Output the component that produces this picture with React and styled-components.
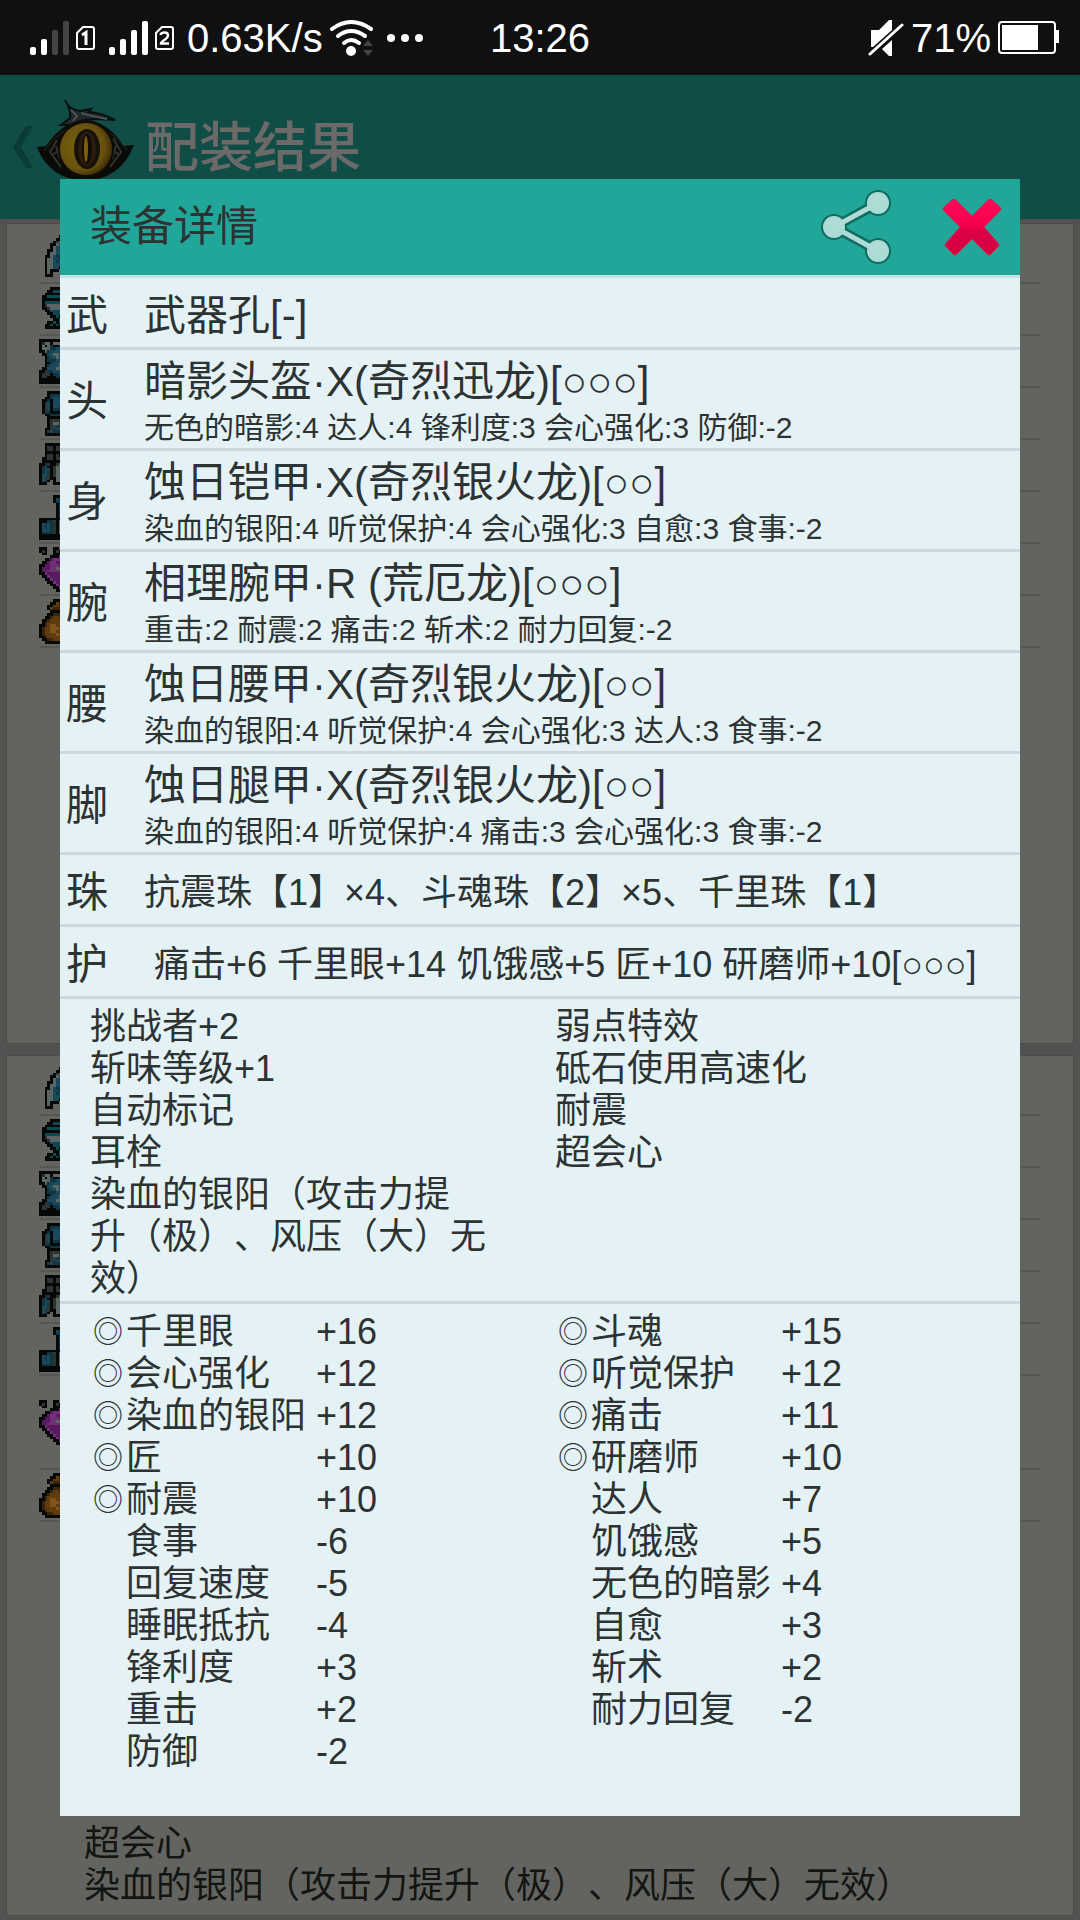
import React, { useState } from 'react';
import styled, { createGlobalStyle } from 'styled-components';

const GEAR = [
    { slot: '武', name: '武器孔[-]' },
    { slot: '头', name: '暗影头盔·X(奇烈迅龙)[○○○]', points: '无色的暗影:4 达人:4 锋利度:3 会心强化:3 防御:-2' },
    { slot: '身', name: '蚀日铠甲·X(奇烈银火龙)[○○]', points: '染血的银阳:4 听觉保护:4 会心强化:3 自愈:3 食事:-2' },
    { slot: '腕', name: '相理腕甲·R (荒厄龙)[○○○]', points: '重击:2 耐震:2 痛击:2 斩术:2 耐力回复:-2' },
    { slot: '腰', name: '蚀日腰甲·X(奇烈银火龙)[○○]', points: '染血的银阳:4 听觉保护:4 会心强化:3 达人:3 食事:-2' },
    { slot: '脚', name: '蚀日腿甲·X(奇烈银火龙)[○○]', points: '染血的银阳:4 听觉保护:4 痛击:3 会心强化:3 食事:-2' },
    { slot: '珠', name: '抗震珠【1】×4、斗魂珠【2】×5、千里珠【1】', small: true },
    { slot: '护', name: ' 痛击+6 千里眼+14 饥饿感+5 匠+10 研磨师+10[○○○]', small: true },
];

const SKILLS = [
    ['挑战者+2', '斩味等级+1', '自动标记', '耳栓', '染血的银阳（攻击力提\n升（极）、风压（大）无\n效）'],
    ['弱点特效', '砥石使用高速化', '耐震', '超会心'],
];

const TOTALS = [
    [
        ['千里眼', '+16', true],
        ['会心强化', '+12', true],
        ['染血的银阳', '+12', true],
        ['匠', '+10', true],
        ['耐震', '+10', true],
        ['食事', '-6'],
        ['回复速度', '-5'],
        ['睡眠抵抗', '-4'],
        ['锋利度', '+3'],
        ['重击', '+2'],
        ['防御', '-2'],
    ],
    [
        ['斗魂', '+15', true],
        ['听觉保护', '+12', true],
        ['痛击', '+11', true],
        ['研磨师', '+10', true],
        ['达人', '+7'],
        ['饥饿感', '+5'],
        ['无色的暗影', '+4'],
        ['自愈', '+3'],
        ['斩术', '+2'],
        ['耐力回复', '-2'],
    ],
];

const RESULT_SKILLS = ['超会心', '染血的银阳（攻击力提升（极）、风压（大）无效）'];

const PIXELS = {
    '#': '#050807',
    w: '#5a6564',
    g: '#2c3436',
    b: '#1b495c',
    c: '#0c4a4f',
    d: '#113643',
    p: '#571a5c',
    m: '#702f76',
    o: '#5f3b0e',
    y: '#80531a',
    n: '#38250b',
};

// left half of each 16x16 sprite, the right half is its mirror
const SPRITES = {
    weapon: [
        '.......#', '......##', '.....#gw', '....##wb', '....#wbb', '...##wbb', '...#wwbb', '..##wbdd',
        '..#wwbbd', '..#wwbdb', '..#wwbbb', '..#wwbb#', '..#w###.', '..#w#...', '..###...', '........',
    ],
    head: [
        '....####', '...##ccc', '..######', '.##ccccc', '.#######', '.#cccccc', '.#gwwwww', '.##gwwww',
        '..##cccc', '...##ccc', '....##c#', '.....##c', '...##c#c', '..##c#c#', '..######', '........',
    ],
    body: [
        '########', '#gww#...', '#w#wd##d', '#wwwddbb', '##wdbbbb', '.##bbwwb', '..#dbbwb', '..#dddbb',
        '..##dbbw', '..#dbbbw', '.##bbbww', '##gddbbb', '#ggg#ddb', '#gg###dd', '########', '########',
    ],
    arm: [
        '...#####', '...#dddd', '..##dbbb', '.##d#bbb', '.#gb#bbb', '.#gb#bbd', '.#gb#ddd', '.#dd####',
        '..##dddd', '...#####', '...#gggg', '...#gwwg', '...#gbgg', '..##ggbb', '..#gbddd', '..######',
    ],
    waist: [
        '..######', '..#gg#gg', '..#gg#gg', '..######', '..#gg#g#', '.##gg#gg', '.#######', '##dg##gw',
        '#db##gww', '#dbb#gww', '#dbg#gww', '#bbg#gww', '#bgg##ww', '#bg#.#ww', '###..###', '........',
    ],
    leg: [
        '.....###', '.....#cd', '.....#dd', '......#d', '......#c', '......#d', '......#d', '......#d',
        '########', '###ddg#w', '#bdbdg#w', '#bdbdg#w', '#bbbdg#w', '#ddddg#w', '########', '########',
    ],
    gem: [
        '###..##.', '#g#..#g#', '.##..###', '....###m', '..##pmmm', '.##pmmpp', '##ppmmmp', '#pppmmww',
        '#ppmmmmm', '##mppppp', '.##mpppp', '..##mppp', '...##mpp', '....##mp', '.....##m', '......##',
    ],
    bag: [
        '.....###', '....##on', '...##oon', '...#onnn', '....####', '...##nnn', '..##noon', '.##noooo',
        '.#nooooo', '##noyyoo', '#nooyyyo', '#nooyyoo', '#nooooyo', '##nooooo', '.##nnooo', '..######',
    ],
};

const SPRITE_ORDER = ['weapon', 'head', 'body', 'arm', 'waist', 'leg', 'gem', 'bag'];

function Sprite({ name }) {
    const rects = [];
    SPRITES[name].forEach((line, y) => {
        (line + line.split('').reverse().join('')).split('').forEach((key, x) => {
            if (PIXELS[key]) {
                rects.push(<rect key={`${x}-${y}`} x={x} y={y} width="1" height="1" fill={PIXELS[key]} />);
            }
        });
    });
    return (
        <svg width="45" height="45" viewBox="0 0 16 16" shapeRendering="crispEdges" aria-hidden="true">
            {rects}
        </svg>
    );
}

function Signal({ level }) {
    return (
        <svg width="39" height="35" viewBox="0 0 39 35" aria-hidden="true">
            {[8, 16, 25, 34].map((h, i) => (
                <rect key={h} x={i * 11} y={35 - h} width="6" height={h} rx="2" fill={i < level ? '#fff' : '#444'} />
            ))}
        </svg>
    );
}

function Sim({ number }) {
    return (
        <svg width="19" height="24" viewBox="0 0 19 24" fill="none" stroke="#fff" strokeWidth="2" aria-hidden="true">
            <path d="M7 1H16Q18 1 18 3V21Q18 23 16 23H3Q1 23 1 21V7Z" />
            {number === 1
                ? <path d="M6 9L10 6.500V19" strokeWidth="3" />
                : <path d="M5.500 9Q6 6.500 9.500 6.500Q13 6.500 13 9.500Q13 11.500 10 13.500Q6 16 6 17.500H14" strokeWidth="2.500" />}
        </svg>
    );
}

function Wifi() {
    return (
        <svg width="44" height="36" viewBox="0 0 44 36" fill="none" stroke="#fff" strokeWidth="4" strokeLinecap="round" aria-hidden="true">
            <path d="M2 9Q21 -5 41 9" />
            <path d="M8 16Q21 6 35 16" />
            <path d="M14 23Q21 17 29 23" />
            <circle cx="21" cy="31" r="5" fill="#fff" stroke="none" />
            <path d="M33 26L38 20L43 26ZM33 30L38 36L43 30Z" fill="#444" stroke="none" />
        </svg>
    );
}

function Muted() {
    return (
        <svg width="36" height="36" viewBox="0 0 36 36" aria-hidden="true">
            <path d="M3 10H11L21 0H24V10L5 27H3Z" fill="#fff" />
            <path d="M24 20V36H21L14 29Z" fill="#fff" />
            <path d="M2 34L34 5" stroke="#fff" strokeWidth="3" strokeLinecap="round" />
        </svg>
    );
}

function Battery() {
    return (
        <svg width="61" height="33" viewBox="0 0 61 33" aria-hidden="true">
            <rect x="1" y="1" width="56" height="31" rx="3" fill="none" stroke="#fff" strokeWidth="2" />
            <rect x="4" y="4" width="36" height="25" fill="#fff" />
            <path d="M58 9H61V22H58Z" fill="#fff" />
        </svg>
    );
}

function EyeLogo() {
    return (
        <svg width="97" height="94" viewBox="0 0 97 94" aria-hidden="true">
            <defs>
                <radialGradient id="iris" cx="0.4" cy="0.45" r="0.65">
                    <stop offset="0" stopColor="#7a640d" />
                    <stop offset="0.7" stopColor="#66500e" />
                    <stop offset="1" stopColor="#352507" />
                </radialGradient>
            </defs>
            <g transform="translate(0 -5)">
                <path d="M0 52L9 51Q26 26 48 25Q70 26 87 51L97 50Q84 84 48 86Q12 84 0 52Z" fill="#090b09" />
                <path d="M7 56Q26 30 48 28Q70 30 90 55" fill="none" stroke="#33281a" strokeWidth="1" />
                <path d="M20 45L13 57L24 72M76 43L84 57L73 72M15 60L24 54M82 60L74 53M19 51L23 64M79 51L75 64" fill="none" stroke="#33312a" strokeWidth="2" />
            </g>
            <path d="M28 0Q31 9 43 11L54 9L52 12Q65 13 78 20L58 19Q44 19 34 25L24 25L33 18Q34 10 28 0Z" fill="#20282b" stroke="#07100f" strokeWidth="2" />
            <path d="M34 10L40 16L36 21M44 13L55 16L70 19" fill="none" stroke="#4b5254" strokeWidth="2" />
            <ellipse cx="49" cy="49" rx="28" ry="29" fill="#100c05" />
            <ellipse cx="49" cy="49" rx="26" ry="26" fill="url(#iris)" />
            <ellipse cx="50" cy="49" rx="13" ry="20" fill="#15120a" />
            <ellipse cx="50" cy="49" rx="9" ry="17" fill="#2c1c0d" />
            <ellipse cx="50" cy="49" rx="5" ry="15" fill="#110b06" />
            <ellipse cx="49" cy="49" rx="2" ry="13" fill="#80600f" />
        </svg>
    );
}

function ShareIcon() {
    return (
        <svg width="70" height="76" viewBox="0 0 70 76" aria-hidden="true">
            <g stroke="#106b60" fill="#106b60">
                <path d="M57 14L13 38L57 62" fill="none" strokeWidth="10" />
                <circle cx="57" cy="14" r="13" stroke="none" />
                <circle cx="13" cy="38" r="13" stroke="none" />
                <circle cx="57" cy="62" r="13" stroke="none" />
            </g>
            <g stroke="#addcd6" fill="#addcd6">
                <path d="M57 14L13 38L57 62" fill="none" strokeWidth="5" />
                <circle cx="57" cy="14" r="11" stroke="none" />
                <circle cx="13" cy="38" r="11" stroke="none" />
                <circle cx="57" cy="62" r="11" stroke="none" />
            </g>
        </svg>
    );
}

function CrossIcon() {
    return (
        <svg width="60" height="60" viewBox="0 0 60 60" aria-hidden="true">
            <defs>
                <linearGradient id="cross" x1="0" y1="0" x2="0" y2="1">
                    <stop offset="0" stopColor="#ff0a55" />
                    <stop offset="0.45" stopColor="#f8004f" />
                    <stop offset="0.6" stopColor="#dc0046" />
                    <stop offset="1" stopColor="#d3003f" />
                </linearGradient>
            </defs>
            <path
                d="M10 3Q12 1 14 3L30 19L46 3Q48 1 50 3L58 10Q60 12 58 14L42 30L56 46Q58 48 56 50L49 57Q47 59 45 57L30 42L15 57Q13 59 11 57L4 50Q2 48 4 46L18 30L2 14Q0 12 2 10Z"
                fill="url(#cross)"
                stroke="#c52a5a"
                strokeWidth="1"
            />
        </svg>
    );
}

/**
 * @description Result card that stays behind the details dialog
 */
function ResultCard({ tallGem, skills }) {
    return (
        <Card $tall={tallGem}>
            <ul>
                {SPRITE_ORDER.map((name) => (
                    <SpriteRow key={name} $tall={tallGem && name === 'gem'}>
                        <Sprite name={name} />
                    </SpriteRow>
                ))}
            </ul>
            <CardSkills>
                {skills.map((skill) => <li key={skill}>{skill}</li>)}
            </CardSkills>
        </Card>
    );
}

export default function App() {
    const [open, setOpen] = useState(true);

    return (
        <Page>
            <GlobalStyle />
            <StatusBar>
                <StatusGroup>
                    <Signal level={2} />
                    <Sim number={1} />
                    <Spacer />
                    <Signal level={4} />
                    <Sim number={2} />
                    <Speed>0.63K/s</Speed>
                    <Wifi />
                    <Dots><i /><i /><i /></Dots>
                </StatusGroup>
                <span>13:26</span>
                <StatusGroup $end>
                    <Muted />
                    <span>71%</span>
                    <Battery />
                </StatusGroup>
            </StatusBar>

            <ActionBar>
                <BackButton type="button" aria-label="返回">
                    <svg width="20" height="42" viewBox="0 0 20 42" aria-hidden="true">
                        <path d="M20 0H13L0 21L13 42H20L8 21Z" fill="#0b3b37" />
                    </svg>
                </BackButton>
                <EyeLogo />
                <h1>配装结果</h1>
            </ActionBar>

            <Results>
                <ResultCard skills={[]} />
                <ResultCard tallGem skills={RESULT_SKILLS} />
            </Results>

            {open && (
                <Overlay>
                    <Dialog role="dialog" aria-labelledby="dialog-title">
                        <DialogHeader>
                            <h2 id="dialog-title">装备详情</h2>
                            <IconButton type="button" aria-label="分享"><ShareIcon /></IconButton>
                            <IconButton type="button" aria-label="关闭" onClick={() => setOpen(false)}><CrossIcon /></IconButton>
                        </DialogHeader>
                        <GearTable>
                            <tbody>
                                {GEAR.map((item) => (
                                    <GearRow key={item.slot} $double={!!item.points}>
                                        <th scope="row">{item.slot}</th>
                                        <td>
                                            <GearName $small={item.small}>{item.name}</GearName>
                                            {item.points && <GearPoints>{item.points}</GearPoints>}
                                        </td>
                                    </GearRow>
                                ))}
                            </tbody>
                        </GearTable>
                        <Columns $line>
                            {SKILLS.map((list) => (
                                <SkillList key={list[0]}>
                                    {list.map((skill) => <li key={skill}>{skill}</li>)}
                                </SkillList>
                            ))}
                        </Columns>
                        <Columns>
                            {TOTALS.map((list) => (
                                <TotalsTable key={list[0][0]}>
                                    <tbody>
                                        {list.map(([name, value, active]) => (
                                            <tr key={name}>
                                                <Mark>{active ? '◎' : ''}</Mark>
                                                <TotalName scope="row">{name}</TotalName>
                                                <td>{value}</td>
                                            </tr>
                                        ))}
                                    </tbody>
                                </TotalsTable>
                            ))}
                        </Columns>
                    </Dialog>
                </Overlay>
            )}
        </Page>
    );
}

const GlobalStyle = createGlobalStyle`
  * {
    box-sizing: border-box;
  }

  body {
    margin: 0;
    background: #525350;
    font-family: "Liberation Sans", "Noto Sans CJK SC", sans-serif;
    text-spacing-trim: space-all;
  }

  h1, h2, ul {
    margin: 0;
    padding: 0;
    font-weight: 400;
    list-style: none;
  }

  svg {
    display: block;
    flex: none;
  }
`;

const Page = styled.div`
  min-height: 100vh;
`;

const StatusBar = styled.header`
  display: grid;
  grid-template-columns: 1fr auto 1fr;
  align-items: center;
  height: 75px;
  padding: 0 21px;
  background: #101010;
  color: #fff;
  font-size: 40px;
  line-height: 48px;
`;

const StatusGroup = styled.div`
  display: flex;
  align-items: center;
  justify-content: ${(props) => (props.$end ? 'flex-end' : 'flex-start')};
  gap: 7px;
  padding-left: 9px;
`;

const Spacer = styled.span`
  width: 0;
`;

const Speed = styled.span`
  padding-left: 6px;
`;

const Dots = styled.span`
  display: flex;
  gap: 6px;
  padding-left: 6px;

  i {
    width: 8px;
    height: 8px;
    border-radius: 50%;
    background: #fff;
  }
`;

const ActionBar = styled.div`
  display: flex;
  align-items: center;
  height: 144px;
  padding-left: 13px;
  background: #104d47;
  color: #6b6a68;

  h1 {
    padding: 2px 0 0 11px;
    font-size: 54px;
    font-weight: 500;
    line-height: 64px;
  }
`;

const BackButton = styled.button`
  margin-right: 4px;
  padding: 0;
  border: 0;
  background: none;
`;

const Results = styled.main`
  display: flex;
  flex-direction: column;
  gap: 11px;
  padding: 4px 6px;
  background: #525350;
`;

const Card = styled.section`
  display: flex;
  flex-direction: column;
  justify-content: space-between;
  min-height: ${(props) => (props.$tall ? 861 : 821)}px;
  padding: 8px 32px;
  border: 1px solid #4a4b49;
  background: #636460;
`;

const SpriteRow = styled.li`
  display: flex;
  align-items: center;
  height: ${(props) => (props.$tall ? 94 : 52)}px;
  border-bottom: 2px solid #555753;
`;

const CardSkills = styled.ul`
  padding-left: 45px;
  color: #131513;
  font-size: 36px;
  line-height: 42px;
`;

const Overlay = styled.div`
  position: fixed;
  inset: 75px 0 0;
  display: flex;
  align-items: center;
  justify-content: center;
  padding: 0 60px;
`;

const Dialog = styled.section`
  width: 100%;
  padding-bottom: 37px;
  background: #e4f2f6;
  color: #2d3232;
`;

const DialogHeader = styled.header`
  display: flex;
  align-items: center;
  gap: 51px;
  height: 99px;
  padding: 0 18px 0 30px;
  border-bottom: 3px solid #c5e0e3;
  background: #21a69a;

  h2 {
    flex: 1;
    font-size: 42px;
    line-height: 48px;
  }
`;

const IconButton = styled.button`
  padding: 0;
  border: 0;
  background: none;
`;

const GearTable = styled.table`
  width: 100%;
  border-spacing: 0;

  th, td {
    padding: 6px 0 0;
    border-bottom: 3px solid #cbd9de;
    font-weight: 400;
    text-align: left;
    vertical-align: middle;
  }

  th {
    width: 84px;
    padding-left: 6px;
    font-size: 42px;
    line-height: 48px;
  }
`;

const GearRow = styled.tr`
  height: ${(props) => (props.$double ? 101 : 72)}px;
`;

const GearName = styled.div`
  font-size: ${(props) => (props.$small ? 36 : 42)}px;
  line-height: 48px;
  white-space: pre-wrap;
`;

const GearPoints = styled.div`
  padding-top: 4px;
  font-size: 30px;
  line-height: 36px;
`;

const Columns = styled.div`
  display: grid;
  grid-template-columns: 1fr 1fr;
  align-items: start;
  padding: 7px 0 ${(props) => (props.$line ? 1 : 6)}px 30px;
  border-bottom: ${(props) => (props.$line ? '3px solid #cbd9de' : '0')};
  font-size: 36px;
  line-height: 42px;
`;

const SkillList = styled.ul`
  white-space: pre-wrap;
`;

const TotalsTable = styled.table`
  border-spacing: 0;

  th, td {
    height: 42px;
    padding: 0;
    font-weight: 400;
    text-align: left;
  }
`;

const Mark = styled.td`
  width: 36px;

  && {
    font-size: 30px;
    text-align: center;
  }
`;

const TotalName = styled.th`
  width: 190px;
`;
